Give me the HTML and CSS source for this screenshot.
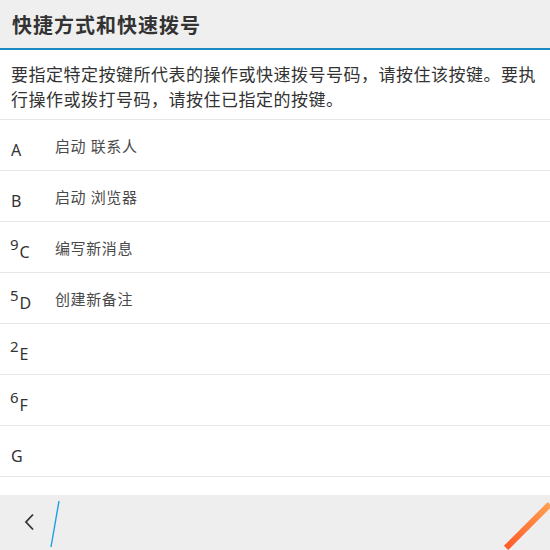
FILE: index.html
```html
<!DOCTYPE html>
<html lang="zh-CN">

<head>
  <meta charset="UTF-8" />
  <meta name="viewport" content="width=device-width, initial-scale=1.0" />
  <title>快捷方式和快速拨号</title>
  <link rel="stylesheet" href="styles.css">
</head>

<body>
  <div class="screen">
    <div class="title-bar">
      <h1 class="title">快捷方式和快速拨号</h1>
    </div>
    <p class="intro">要指定特定按键所代表的操作或快速拨号号码，请按住该按键。要执行操作或拨打号码，请按住已指定的按键。</p>
    <ul class="keys">
      <li class="key-row">
        <div class="key"><span class="letter">A</span></div>
        <div class="label">启动 联系人</div>
      </li>
      <li class="key-row">
        <div class="key"><span class="letter">B</span></div>
        <div class="label">启动 浏览器</div>
      </li>
      <li class="key-row">
        <div class="key"><span class="num">9</span><span class="letter">C</span></div>
        <div class="label">编写新消息</div>
      </li>
      <li class="key-row">
        <div class="key"><span class="num">5</span><span class="letter">D</span></div>
        <div class="label">创建新备注</div>
      </li>
      <li class="key-row">
        <div class="key"><span class="num">2</span><span class="letter">E</span></div>
        <div class="label"></div>
      </li>
      <li class="key-row">
        <div class="key"><span class="num">6</span><span class="letter">F</span></div>
        <div class="label"></div>
      </li>
      <li class="key-row">
        <div class="key"><span class="letter">G</span></div>
        <div class="label"></div>
      </li>
    </ul>
    <div class="action-bar">
      <button class="back" aria-label="返回">
        <svg width="12" height="18" viewBox="0 0 12 18">
          <path d="M9 1.5 L2 9 L9 16.5" fill="none" stroke="#333" stroke-width="1.8" />
        </svg>
      </button>
      <svg class="divider" width="12" height="48" viewBox="0 0 12 48">
        <path d="M10 1 L2 47" stroke="#1ba1e2" stroke-width="1.4" />
      </svg>
    </div>
    <div class="ribbon"></div>
  </div>
</body>

</html>
```

FILE: styles.css
```css
* {
  box-sizing: border-box;
}

body {
  margin: 0;
  background: #fff;
  font-family: "Noto Sans", "Noto Sans CJK SC", sans-serif;
  color: #333;
}

.screen {
  position: relative;
  width: 550px;
  height: 550px;
  overflow: hidden;
  display: flex;
  flex-direction: column;
}

.title-bar {
  height: 50px;
  background: #efefef;
  border-bottom: 2px solid #1a8bc2;
  padding: 0 12px;
  display: flex;
  align-items: center;
}

.title {
  margin: 0;
  font-size: 20px;
  font-weight: bold;
  letter-spacing: 1px;
  color: #333;
}

.intro {
  margin: 0;
  padding: 12px 8px 7px 11px;
  font-size: 17px;
  line-height: 25px;
  letter-spacing: 0.5px;
  color: #333;
  border-bottom: 1px solid #e6e6e6;
}

.keys {
  list-style: none;
  margin: 0;
  padding: 0;
  flex: 1;
}

.key-row {
  height: 51px;
  border-bottom: 1px solid #e6e6e6;
  display: flex;
  align-items: center;
}

.key {
  width: 55px;
  height: 50px;
  padding-left: 10px;
  display: flex;
  align-items: flex-start;
}

.num {
  font-size: 15px;
  line-height: 15px;
  margin-top: 15px;
  margin-right: 1px;
}

.letter {
  font-size: 16px;
  line-height: 16px;
  margin-top: 22px;
  margin-left: 1px;
}

.num + .letter {
  margin-left: 0;
}

.label {
  font-size: 15px;
  letter-spacing: 0.6px;
  color: #4a4a4a;
}

.action-bar {
  height: 55px;
  background: #eeeeee;
  display: flex;
  align-items: center;
}

.back {
  width: 52px;
  height: 55px;
  border: none;
  background: none;
  padding: 0 0 2px 8px;
  display: flex;
  align-items: center;
  justify-content: center;
}

.divider {
  margin-left: -3px;
  margin-top: 2px;
}

.ribbon {
  position: absolute;
  left: 497px;
  top: 523px;
  width: 62px;
  height: 6px;
  background: linear-gradient(90deg, #ff5a2a, #ffa050);
  transform: rotate(-45deg);
}
```
